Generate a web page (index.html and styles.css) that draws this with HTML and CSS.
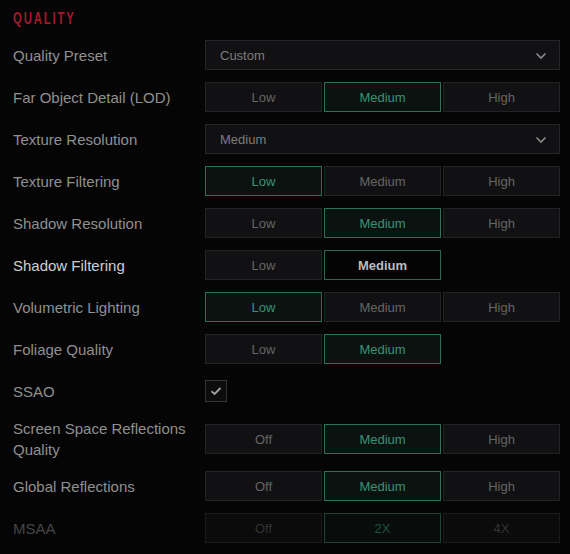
FILE: index.html
```html
<!DOCTYPE html>
<html>
<head>
<meta charset="utf-8">
<link rel="stylesheet" href="styles.css">
</head>
<body>
<div class="panel">
  <h2 class="title"><span class="title-text">QUALITY</span></h2>
  <div class="rows">
    <div class="row">
      <div class="label">Quality Preset</div>
      <div class="select"><span>Custom</span><svg class="chev" width="12" height="8" viewBox="0 0 12 8"><path d="M1.5 1.5 L6 6 L10.5 1.5" fill="none" stroke="#8a8a8a" stroke-width="1.6"/></svg></div>
    </div>
    <div class="row">
      <div class="label">Far Object Detail (LOD)</div>
      <div class="seg"><div class="btn">Low</div><div class="btn active">Medium</div><div class="btn">High</div></div>
    </div>
    <div class="row">
      <div class="label">Texture Resolution</div>
      <div class="select"><span>Medium</span><svg class="chev" width="12" height="8" viewBox="0 0 12 8"><path d="M1.5 1.5 L6 6 L10.5 1.5" fill="none" stroke="#8a8a8a" stroke-width="1.6"/></svg></div>
    </div>
    <div class="row">
      <div class="label">Texture Filtering</div>
      <div class="seg"><div class="btn active">Low</div><div class="btn">Medium</div><div class="btn">High</div></div>
    </div>
    <div class="row">
      <div class="label">Shadow Resolution</div>
      <div class="seg"><div class="btn">Low</div><div class="btn active">Medium</div><div class="btn">High</div></div>
    </div>
    <div class="row hover">
      <div class="label">Shadow Filtering</div>
      <div class="seg"><div class="btn">Low</div><div class="btn active hot">Medium</div></div>
    </div>
    <div class="row">
      <div class="label">Volumetric Lighting</div>
      <div class="seg"><div class="btn active">Low</div><div class="btn">Medium</div><div class="btn">High</div></div>
    </div>
    <div class="row">
      <div class="label">Foliage Quality</div>
      <div class="seg"><div class="btn">Low</div><div class="btn active">Medium</div></div>
    </div>
    <div class="row">
      <div class="label">SSAO</div>
      <div class="check"><svg width="14" height="12" viewBox="0 0 14 12"><path d="M2.5 6.2 L5.6 9 L11.5 3" fill="none" stroke="#a0a0a0" stroke-width="1.9"/></svg></div>
    </div>
    <div class="row tall">
      <div class="label">Screen Space Reflections Quality</div>
      <div class="seg"><div class="btn">Off</div><div class="btn active">Medium</div><div class="btn">High</div></div>
    </div>
    <div class="row">
      <div class="label">Global Reflections</div>
      <div class="seg"><div class="btn">Off</div><div class="btn active">Medium</div><div class="btn">High</div></div>
    </div>
    <div class="row disabled">
      <div class="label">MSAA</div>
      <div class="seg"><div class="btn">Off</div><div class="btn active">2X</div><div class="btn">4X</div></div>
    </div>
  </div>
</div>
</body>
</html>
```
FILE: styles.css
```css
html, body {
  margin: 0;
  padding: 0;
  background: #050506;
}
body {
  font-family: "Liberation Sans", Arial, sans-serif;
  width: 570px;
  height: 554px;
  overflow: hidden;
}
.panel {
  padding: 11px 10px 0 13px;
}
.title {
  margin: 0;
  height: 29px;
  font-size: 16px;
  line-height: 16px;
}
.title-text {
  display: inline-block;
  font-family: "Liberation Sans", Arial, sans-serif;
  font-weight: bold;
  font-size: 16px;
  line-height: 16px;
  letter-spacing: 2.6px;
  color: #a3192b;
  transform: scaleX(0.71);
  transform-origin: left center;
}
.rows {
  display: flex;
  flex-direction: column;
  gap: 12px;
}
.row {
  display: grid;
  grid-template-columns: 192px 355px;
  align-items: center;
  min-height: 30px;
}
.row.tall {
  margin-bottom: -1px;
}
.label {
  font-size: 15px;
  line-height: 21px;
  color: #909090;
  padding-right: 12px;
}
.row.hover .label {
  color: #cfcfcf;
}
.row.disabled .label {
  color: #464646;
}
.select {
  box-sizing: border-box;
  height: 30px;
  border: 1px solid #262628;
  background: #111113;
  display: flex;
  align-items: center;
  justify-content: space-between;
  padding: 0 12px 0 14px;
  font-size: 13px;
  color: #7c7c7c;
}
.chev {
  display: block;
  margin-top: 1px;
}
.seg {
  display: grid;
  grid-template-columns: repeat(3, 117px);
  gap: 2px;
}
.btn {
  box-sizing: border-box;
  height: 30px;
  border: 1px solid #232325;
  background: #111113;
  display: flex;
  align-items: center;
  justify-content: center;
  font-size: 13px;
  color: #656565;
}
.btn.active {
  border-color: #2b7159;
  background: #0b1311;
  color: #3a9274;
}
.btn.active.hot {
  background: #040405;
  color: #bdbdbd;
  font-weight: bold;
  border-color: #2a6654;
}
.row.disabled .btn {
  color: #333333;
  border-color: #1a1a1c;
  background: #0b0b0c;
}
.row.disabled .btn.active {
  color: #1e5140;
  border-color: #1c4337;
  background: #080d0b;
}
.check {
  box-sizing: border-box;
  width: 22px;
  height: 22px;
  border: 1px solid #343436;
  background: #0d0d0e;
  display: flex;
  align-items: center;
  justify-content: center;
}
```
